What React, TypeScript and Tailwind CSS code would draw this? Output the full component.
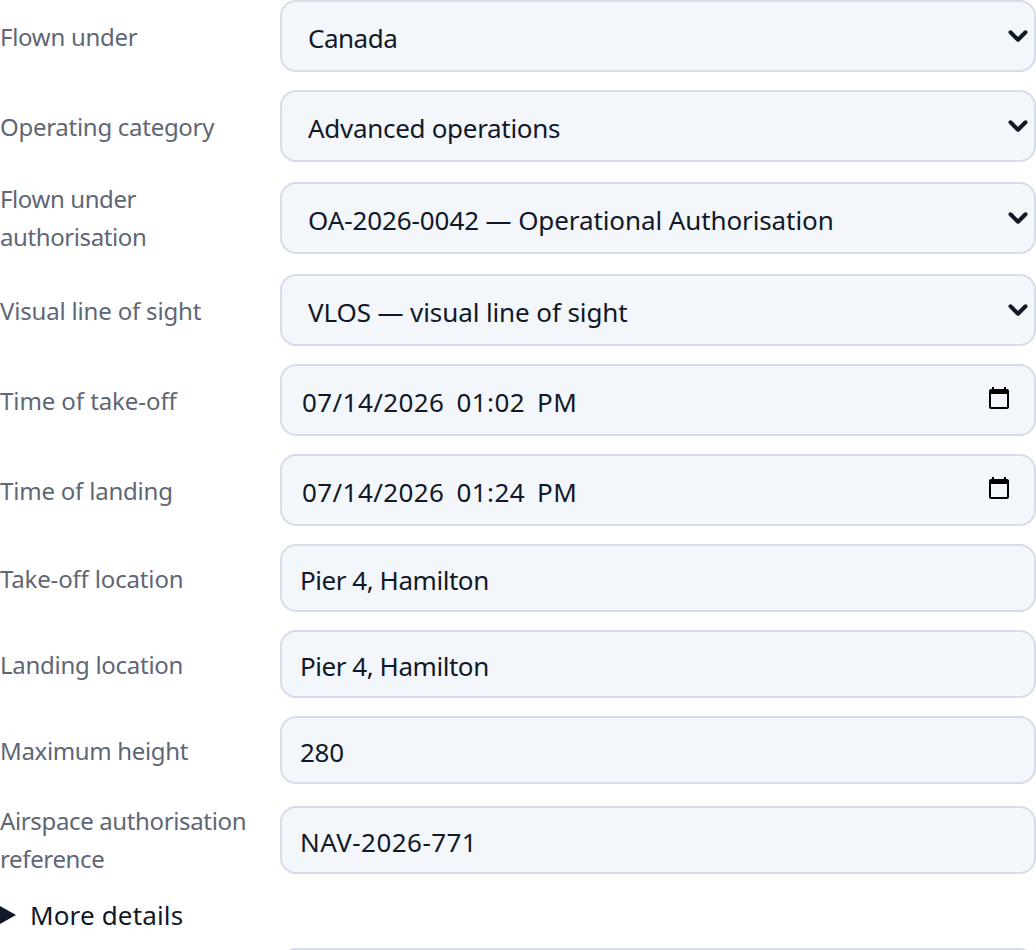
import { ChevronDown } from "lucide-react";
import type { ReactNode } from "react";

const fieldClass =
  "w-full bg-[#f3f6fb] border-2 border-[#d6dce8] rounded-[16px] text-[26px] text-[#111827] outline-none";

function Row({
  label,
  wrap,
  tracking,
  children,
}: {
  label: string;
  wrap?: boolean;
  tracking?: string;
  children: ReactNode;
}) {
  return (
    <div className="grid grid-cols-[280px_1fr] items-center">
      <label
        className={`text-[24px] leading-[38px] ${tracking ?? "tracking-[-0.28px]"} text-[#5f6675] pr-6 ${wrap ? "" : "pt-[2px]"}`}
      >
        {label}
      </label>
      {children}
    </div>
  );
}

function SelectField({ value, tracking }: { value: string; tracking: string }) {
  return (
    <div className="relative">
      <select
        defaultValue={value}
        className={`${fieldClass} ${tracking} appearance-none h-[72px] pl-[26px] pr-12 pt-[4px]`}
      >
        <option>{value}</option>
      </select>
      <ChevronDown
        className="absolute right-[3px] top-[21px] w-[30px] h-[30px] text-[#111827] pointer-events-none"
        strokeWidth={3.2}
      />
    </div>
  );
}

// plain text input, the browser's datetime field puts a comma in the value
function DateField({ value }: { value: string }) {
  return (
    <div className="relative">
      <input
        type="text"
        defaultValue={value}
        className={`${fieldClass} h-[72px] px-[20px] pt-[4px] tracking-[0.4px] [word-spacing:5px]`}
      />
      <svg
        viewBox="0 0 24 24"
        className="absolute right-[25px] top-[22px] w-[24px] h-[24px] pointer-events-none"
        fill="#000"
      >
        <path d="M20 3h-1V1h-2v2H7V1H5v2H4c-1.1 0-2 .9-2 2v16c0 1.1.9 2 2 2h16c1.1 0 2-.9 2-2V5c0-1.1-.9-2-2-2zm0 18H4V8h16v13z" />
      </svg>
    </div>
  );
}

function TextField({ value, tracking }: { value: string; tracking?: string }) {
  return (
    <input
      type="text"
      defaultValue={value}
      className={`${fieldClass} ${tracking ?? ""} h-[68px] px-[18px] pt-[4px]`}
    />
  );
}

export default function App() {
  return (
    <div className="bg-white h-[950px] overflow-hidden font-['Noto_Sans','Open_Sans',sans-serif]">
      <form className="flex flex-col gap-[18px]">
        <Row label="Flown under">
          <SelectField value="Canada" tracking="tracking-[-0.5px]" />
        </Row>
        <Row label="Operating category">
          <SelectField value="Advanced operations" tracking="tracking-[-0.3px]" />
        </Row>
        <Row label="Flown under authorisation" wrap tracking="tracking-[-0.4px]">
          <SelectField
            value="OA-2026-0042 — Operational Authorisation"
            tracking="tracking-[-0.1px]"
          />
        </Row>
        <Row label="Visual line of sight" tracking="tracking-[-0.18px]">
          <SelectField
            value="VLOS — visual line of sight"
            tracking="tracking-[-0.1px]"
          />
        </Row>
        <Row label="Time of take-off" tracking="tracking-[-0.08px]">
          <DateField value="07/14/2026 01:02 PM" />
        </Row>
        <Row label="Time of landing" tracking="tracking-[-0.2px]">
          <DateField value="07/14/2026 01:24 PM" />
        </Row>
        <Row label="Take-off location" tracking="tracking-[-0.16px]">
          <TextField value="Pier 4, Hamilton" tracking="tracking-[-0.45px]" />
        </Row>
        <Row label="Landing location">
          <TextField value="Pier 4, Hamilton" tracking="tracking-[-0.45px]" />
        </Row>
        <Row label="Maximum height" tracking="tracking-[-0.35px]">
          <TextField value="280" tracking="tracking-[-0.3px]" />
        </Row>
        <Row
          label="Airspace authorisation reference"
          wrap
          tracking="tracking-[-0.36px]"
        >
          <TextField value="NAV-2026-771" tracking="tracking-[0.45px]" />
        </Row>
        <details>
          <summary className="text-[26px] leading-[38px] tracking-[0.15px] text-[#111827] flex items-center gap-[14px]">
            <svg width="16" height="18" viewBox="0 0 16 18" className="shrink-0">
              <path d="M0 0 L16 9 L0 18 Z" fill="#111827" />
            </svg>
            More details
          </summary>
        </details>
      </form>
      <div className="ml-[280px] mt-[14px]">
        <TextField value="" />
      </div>
    </div>
  );
}
